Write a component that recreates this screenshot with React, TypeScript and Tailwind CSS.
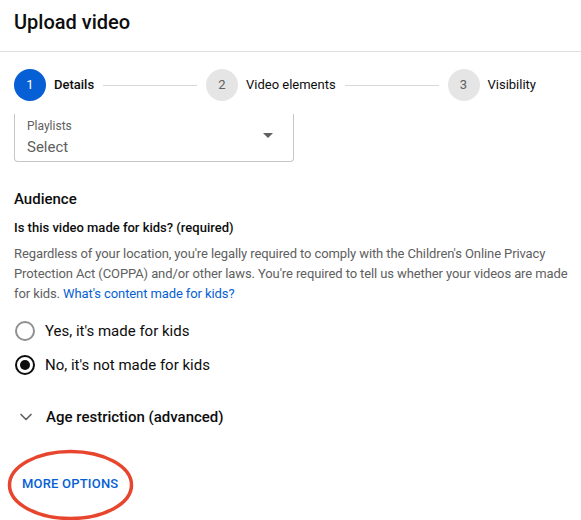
import { ChevronDown } from "lucide-react";

function Step({ n, label, active }: { n: number; label: string; active?: boolean }) {
  return (
    <div className="flex items-center">
      <div
        className={`flex h-8 w-8 shrink-0 items-center justify-center rounded-full text-[13px] ${
          active ? "bg-[#065fd4] text-white" : "bg-[#e5e5e5] text-[#606060]"
        }`}
      >
        {n}
      </div>
      <span className={`ml-2 text-[13px] text-[#0d0d0d] ${active ? "font-medium" : ""}`}>{label}</span>
    </div>
  );
}

function Radio({ checked, label }: { checked?: boolean; label: string }) {
  return (
    <label className="flex h-[34px] items-center">
      <span
        className={`ml-px flex h-5 w-5 items-center justify-center rounded-full border-2 ${
          checked ? "border-[#0d0d0d]" : "border-[#909090]"
        }`}
      >
        {checked && <span className="h-[10px] w-[10px] rounded-full bg-[#0d0d0d]" />}
      </span>
      <span className="ml-[10px] text-[15px] text-[#0d0d0d]">{label}</span>
    </label>
  );
}

export default function App() {
  return (
    <div
      className="h-[520px] w-[581px] overflow-hidden bg-white"
      style={{ fontFamily: "Roboto, 'Liberation Sans', sans-serif" }}
    >
      {/* header */}
      <div className="h-[52px] border-b border-[#e0e0e0] px-[14px] pt-[9px]">
        <h1 className="text-[20px] font-medium leading-[26px] text-[#0d0d0d]">Upload video</h1>
      </div>

      {/* stepper */}
      <div className="flex items-center pl-[14px] pr-[45px] pt-[17px]">
        <Step n={1} label="Details" active />
        <div className="mx-[9px] h-px flex-1 bg-[#d9d9d9]" />
        <Step n={2} label="Video elements" />
        <div className="mx-[9px] h-px flex-1 bg-[#d9d9d9]" />
        <Step n={3} label="Visibility" />
      </div>

      <div className="pl-[14px]">
        {/* playlists select, scrolled partly out of view */}
        <div className="mt-[13px] flex h-[48px] w-[280px] items-center rounded-b border-x border-b border-[#c6c6c6] pl-3 pr-5">
          <div className="flex-1">
            <div className="text-[12px] leading-4 text-[#606060]">Playlists</div>
            <div className="mt-[3px] text-[15px] leading-5 text-[#606060]">Select</div>
          </div>
          <svg width="10" height="5" viewBox="0 0 10 5" className="mb-[4px]">
            <path d="M0 0h10L5 5z" fill="#606060" />
          </svg>
        </div>

        {/* audience */}
        <h2 className="mt-[27px] text-[15px] font-medium leading-5 text-[#0d0d0d]">Audience</h2>
        <div className="mt-[9px] text-[13px] font-medium leading-5 text-[#0d0d0d]">
          Is this video made for kids? (required)
        </div>
        <p className="mt-[6px] pr-[6px] text-[13px] leading-5 tracking-[-0.1px] text-[#606060]">
          Regardless of your location, you're legally required to comply with the Children's Online Privacy
          Protection Act (COPPA) and/or other laws. You're required to tell us whether your videos are made
          for kids. <a className="text-[#065fd4]">What's content made for kids?</a>
        </p>

        <div className="mt-[10px] flex flex-col">
          <Radio label="Yes, it's made for kids" />
          <Radio label="No, it's not made for kids" checked />
        </div>

        <div className="mt-[24px] flex items-center">
          <ChevronDown size={20} strokeWidth={2} className="ml-[2px] text-[#606060]" />
          <span className="ml-[10px] text-[15px] font-medium text-[#0d0d0d]">Age restriction (advanced)</span>
        </div>

        {/* more options, circled */}
        <div className="relative mt-[45px] ml-[8px] inline-block">
          <span className="block text-[13px] font-medium leading-5 tracking-[0.2px] text-[#065fd4]">
            MORE OPTIONS
          </span>
          <svg
            className="pointer-events-none absolute left-[-16px] top-[-25px]"
            width="130"
            height="72"
            viewBox="0 0 130 72"
          >
            <ellipse cx="64.5" cy="36" rx="61" ry="33.5" fill="none" stroke="#e8452e" strokeWidth="3.5" />
          </svg>
        </div>
      </div>
    </div>
  );
}
